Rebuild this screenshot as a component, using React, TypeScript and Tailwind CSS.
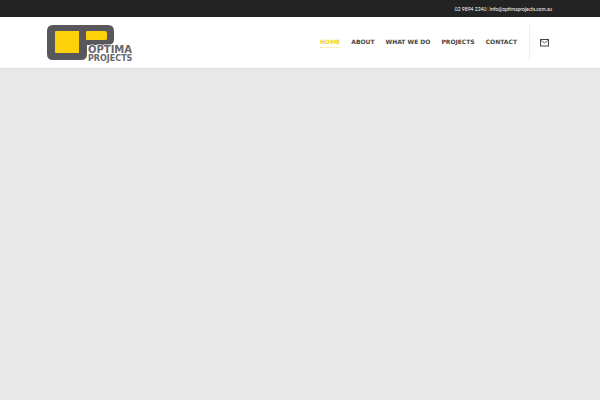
import React from "react";

const links = ["ABOUT", "WHAT WE DO", "PROJECTS", "CONTACT"];

function Logo() {
  return (
    <svg width="94" height="36" viewBox="0 0 94 36" className="overflow-visible" role="img" aria-label="Optima Projects">
      <path
        d="M6 0H61Q67 0 67 6V14Q67 20 61 20H40V29Q40 35 34 35H6Q0 35 0 29V6Q0 0 6 0Z"
        fill="#58585c"
      />
      <path d="M9 6H32V28H9Q8 28 8 27V7Q8 6 9 6Z" fill="#fcd00a" />
      <path d="M40 6H58Q60 6 60 8V14Q60 15 58 15H40Q39 15 39 14V7Q39 6 40 6Z" fill="#fcd00a" />
      <text
        x="41"
        y="28"
        fontSize="10"
        fontWeight="700"
        fill="#66666a"
        stroke="#ffffff"
        strokeWidth="1"
        paintOrder="stroke"
        fontFamily="DejaVu Sans, sans-serif"
      >
        OPTIMA
      </text>
      <text x="41" y="36" fontSize="8" fontWeight="700" fill="#66666a" fontFamily="DejaVu Sans, sans-serif">
        PROJECTS
      </text>
    </svg>
  );
}

export default function App() {
  return (
    <div className="flex min-h-screen flex-col bg-[#e8e8e8] font-['DejaVu_Sans',sans-serif]">
      <div className="flex h-[17px] items-center justify-end gap-px bg-[#232323] px-12 pt-0.5 font-['Lato',sans-serif] text-[5px] leading-none text-white">
        <a href="tel:0298942240">02 9894 2240</a>
        <span className="text-[#888888]">|</span>
        <a href="mailto:info@optimaprojects.com.au">info@optimaprojects.com.au</a>
      </div>
      <header className="flex h-[52px] items-center justify-between border-b border-[#dddddd] bg-white pr-[51px] pl-[47px]">
        <a href="#home">
          <Logo />
        </a>
        <div className="flex h-full items-center">
          <nav className="flex items-center gap-[11px] text-[6px] leading-[10px] font-bold text-[#444444]">
            <a href="#home" className="border-b border-[#f7efb5] text-[#f0d21c]">
              HOME
            </a>
            {links.map((label) => (
              <a key={label} href="#" className="border-b border-transparent whitespace-nowrap">
                {label}
              </a>
            ))}
          </nav>
          <div className="ml-3 h-9 w-px bg-[#eeeeee]" />
          <a href="mailto:info@optimaprojects.com.au" aria-label="Email" className="ml-[10px]">
            <svg width="9" height="8" viewBox="0 0 9 8" fill="none" stroke="#444444">
              <rect x="0.5" y="0.5" width="8" height="6.5" />
              <path d="M1 1.5L4.5 4L8 1.5" strokeWidth="0.8" />
            </svg>
          </a>
        </div>
      </header>
      <main className="flex-1" />
    </div>
  );
}
